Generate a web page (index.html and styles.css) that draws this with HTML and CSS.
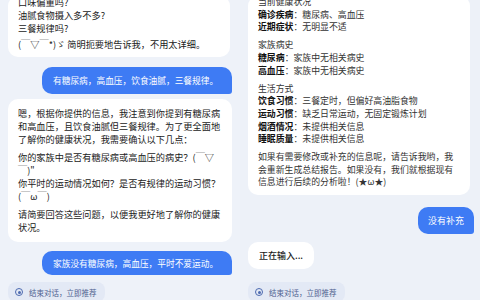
FILE: index.html
```html
<!DOCTYPE html>
<html lang="zh-CN">
<head>
<meta charset="utf-8">
<link rel="stylesheet" href="styles.css">
</head>
<body>
<div class="screen">
  <section class="panel left">
    <div class="card card-a">
      <p>口味偏重吗?<br>油腻食物摄入多不多?<br>三餐规律吗?</p>
      <p>(￣▽￣*)ゞ 简明扼要地告诉我，不用太详细。</p>
    </div>
    <div class="user u1">有糖尿病，高血压，饮食油腻，三餐规律。</div>
    <div class="card card-b">
      <p>嗯，根据你提供的信息，我注意到你提到有糖尿病<br>和高血压，且饮食油腻但三餐规律。为了更全面地<br>了解你的健康状况，我需要确认以下几点：</p>
      <p>你的家族中是否有糖尿病或高血压的病史？(￣▽<br>￣)"<br>你平时的运动情况如何？是否有规律的运动习惯？<br>(￣ω￣)</p>
      <p>请简要回答这些问题，以便我更好地了解你的健康<br>状况。</p>
    </div>
    <div class="user u2">家族没有糖尿病，高血压，平时不爱运动。</div>
    <div class="chip chip-l"><span class="ico"></span>结束对话，立即推荐</div>
  </section>
  <section class="panel right">
    <div class="card card-c">
      <p>当前健康状况<br><b>确诊疾病</b>：糖尿病、高血压<br><b>近期症状</b>：无明显不适</p>
      <p>家族病史<br><b>糖尿病</b>：家族中无相关病史<br><b>高血压</b>：家族中无相关病史</p>
      <p>生活方式<br><b>饮食习惯</b>：三餐定时，但偏好高油脂食物<br><b>运动习惯</b>：缺乏日常运动，无固定锻炼计划<br><b>烟酒情况</b>：未提供相关信息<br><b>睡眠质量</b>：未提供相关信息</p>
      <p>如果有需要修改或补充的信息呢，请告诉我哟，我<br>会重新生成总结报告。如果没有，我们就根据现有<br>信息进行后续的分析啦！(★ω★)</p>
    </div>
    <div class="user u3">没有补充</div>
    <div class="typing">正在输入...</div>
    <div class="chip chip-r"><span class="ico"></span>结束对话，立即推荐</div>
  </section>
</div>
</body>
</html>
```
FILE: styles.css
```css
* { box-sizing: border-box; }
html, body { margin: 0; padding: 0; }
body {
  width: 480px;
  height: 300px;
  overflow: hidden;
  background: #eef2f9;
  font-family: "Noto Sans CJK SC", "Noto Sans", sans-serif;
  color: #222;
}
.screen {
  display: flex;
  width: 480px;
  height: 300px;
}
.panel {
  width: 240px;
  height: 300px;
  overflow: hidden;
  display: flex;
  flex-direction: column;
  justify-content: flex-end;
  align-items: flex-start;
}
.panel.left { padding: 0 8px 0 8px; background: #eef2f9; }
.panel.right { padding: 0 8px 0 8px; background: #edf1f8; }
.card {
  background: #fff;
  border-radius: 10px;
  flex-shrink: 0;
}
.card p { margin: 0; white-space: nowrap; }
.card-a {
  width: 222px;
  padding: 0 10px 6px;
  font-size: 9.2px;
  line-height: 13px;
  margin-bottom: 10px;
}
.card-a p + p { margin-top: 3px; }
.card-b {
  width: 224px;
  padding: 8px 10px 8px;
  font-size: 9.2px;
  line-height: 13px;
  margin-bottom: 9px;
}
.card-b p + p { margin-top: 5px; }
.card-c {
  width: 222px;
  padding: 0 10px 6px;
  font-size: 8.9px;
  line-height: 12.6px;
  margin-bottom: 12px;
  color: #333;
}
.card-c b { color: #111; font-weight: 700; }
.card-c p + p { margin-top: 5.5px; }
.user {
  flex-shrink: 0;
  background: #3e7bf4;
  color: #fff;
  font-size: 8.7px;
  border-radius: 10px 10px 3px 10px;
  display: flex;
  align-items: center;
  padding: 0 12px 0 11px;
  white-space: nowrap;
}
.u1 { align-self: flex-end; width: 190px; height: 27px; margin-bottom: 5px; }
.u2 { align-self: flex-end; width: 190px; height: 24px; margin-bottom: 7px; }
.u3 {
  align-self: flex-end;
  width: 56px;
  height: 27px;
  font-size: 9px;
  padding: 0 10px;
  margin-right: -2px;
  margin-bottom: 8px;
}
.typing {
  flex-shrink: 0;
  background: #fff;
  border-radius: 10px;
  height: 27px;
  width: 66px;
  padding: 0 11px;
  display: flex;
  align-items: center;
  font-size: 9px;
  font-weight: 500;
  color: #1a1a1a;
  margin-bottom: 13px;
  white-space: nowrap;
}
.chip {
  flex-shrink: 0;
  height: 20px;
  margin-bottom: -2px;
  background: #e3e9f5;
  border-radius: 8px;
  display: flex;
  align-items: center;
  padding: 0 6px 0 7px;
  font-size: 7.5px;
  color: #4f6190;
  white-space: nowrap;
}
.chip-l { width: 97px; }
.chip-r { width: 97px; }
.ico {
  width: 8px;
  height: 8px;
  border: 1px solid #4d6ab0;
  border-radius: 50%;
  margin-right: 6px;
  display: flex;
  align-items: center;
  justify-content: center;
  flex-shrink: 0;
}
.ico::after {
  content: "";
  width: 3px;
  height: 3px;
  border-radius: 50%;
  background: #4d6ab0;
}
```
